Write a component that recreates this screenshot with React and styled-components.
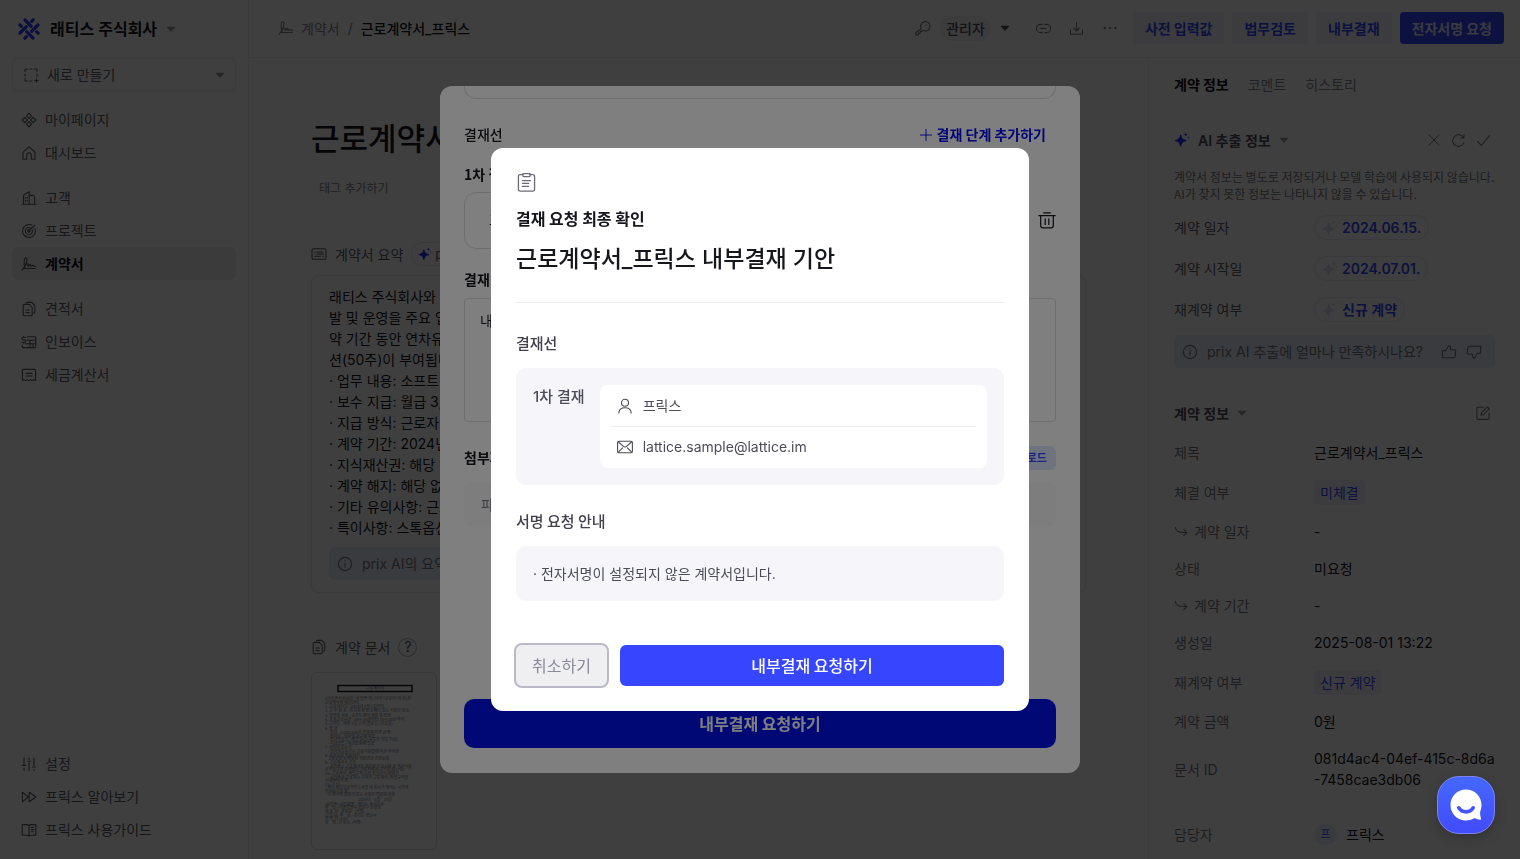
import React from 'react';
import styled, { createGlobalStyle, css } from 'styled-components';

const latin = "Inter, 'Noto Sans CJK KR', sans-serif";
const korean = "'Noto Sans CJK KR', Inter, sans-serif";

const GlobalStyle = createGlobalStyle`
  * {
    box-sizing: border-box;
  }

  body {
    margin: 0;
    background: #fff;
    color: #16161d;
    font-family: ${latin};
    font-size: 14px;
    line-height: 21px;
  }

  h1, h2, h3, p, ul, dl, dd {
    margin: 0;
    padding: 0;
    font-weight: 400;
  }

  button {
    padding: 0;
    border: none;
    background: none;
    color: inherit;
    font: inherit;
    cursor: pointer;
  }

  a {
    color: inherit;
    text-decoration: none;
  }

  svg {
    display: block;
    flex: none;
  }
`;

/* icons */

const Svg = styled.svg`
  width: ${(p) => p.$size || 16}px;
  height: ${(p) => p.$size || 16}px;
  fill: none;
  stroke: currentColor;
  stroke-width: 1.1;
  stroke-linecap: round;
  stroke-linejoin: round;
`;

const shapes = {
  newBox: (
    <>
      <path d="M2 4.5V2.8a.8.8 0 0 1 .8-.8h1.7M7 2h2M11.5 2h1.7a.8.8 0 0 1 .8.8v1.7M14 7v2M2 7v2M2 11.5v1.7a.8.8 0 0 0 .8.8h1.7M7 14h2" />
      <path d="M13.5 11.8v3.4M11.8 13.5h3.4" />
    </>
  ),
  diamonds: (
    <>
      <path d="M8 1.2 10.6 3.8 8 6.4 5.4 3.8zM8 9.6l2.6 2.6L8 14.8l-2.6-2.6zM3.8 5.4 6.4 8l-2.6 2.6L1.2 8zM12.2 5.4 14.8 8l-2.6 2.6L9.6 8z" />
    </>
  ),
  home: <path d="M2 7.2 8 1.8l6 5.4v7h-3.8V10a2.2 2.2 0 0 0-4.4 0v4.2H2z" />,
  building: (
    <>
      <path d="M1 14.2h14M2.6 14V5l5.6-3.4V14M8.2 5.4h4a1.4 1.4 0 0 1 1.4 1.4V14" />
      <path d="M4.6 7.4v.8M6.3 7.4v.8M4.6 10.4v.8M6.3 10.4v.8" />
    </>
  ),
  target: (
    <>
      <path d="M10.8 2.1a6.5 6.5 0 1 0 3.2 3.3" />
      <path d="M9.6 4.9A3.6 3.6 0 1 0 11.3 6.8" />
      <path d="M9.2 8a1.3 1.3 0 1 1-1.3-1.3M8 8l6-6" />
    </>
  ),
  sign: (
    <path d="M1 14.4C3.6 11 6 6.8 6 3.4 6 1 3.4 1.2 3.2 4.6c-.2 3 .2 6.200.8 7.600M3.400 11c1.400-2.400 2.800-3.400 3.400-3 .600.400-.200 2.400.600 2.400s1-2.400 1.800-2.200c.700.200 0 2.200.800 2.200s.900-1.200 1.600-1.100c.600.100.600 1.100 2.800 1.100M2.400 12.500h12" />
  ),
  docs: (
    <>
      <path d="M5.400 2.200A1.400 1.400 0 0 1 6.600 1.400h4.200l3 3v6.400a1.400 1.400 0 0 1-1.200 1.400" />
      <path d="M2.200 4.800a1.400 1.400 0 0 1 1.400-1.400h4.600l3 3v7a1.400 1.400 0 0 1-1.400 1.400H3.600a1.400 1.400 0 0 1-1.400-1.400zM5 9h3.200M5 11.600h3.200" />
    </>
  ),
  invoice: (
    <>
      <path d="M6 2.800h7.600a1.200 1.200 0 0 1 1.200 1.200v8.400a1.200 1.200 0 0 1-1.200 1.200H2.400a1.200 1.200 0 0 1-1.200-1.200v-1M6 6.200h8.800M4.400 9.800h10.400M9 6.200v7.200M12 9.800v3.600" />
      <path d="M4.400 3.200H2.200a1.200 1.200 0 0 0 0 2.500h1.200a1.300 1.300 0 0 1 0 2.600H1M2.800 2.400v.8M2.800 8.300v1" />
    </>
  ),
  taxBill: <path d="M2.400 2.400h11.200a1 1 0 0 1 1 1v10.200l-1.700-1-1.600 1-1.700-1-1.600 1-1.700-1-1.600 1-1.700-1-1.600 1V3.400a1 1 0 0 1 1-1zM5 6.400h6M5 9h6" />,
  sliders: <path d="M3 2v6M1.400 9.400h3.200M3 12v2.400M8 2v1.600M6.400 5.200h3.200M8 7v7.400M13 2v7.600M11.400 11h3.200M13 13.200v1.200" />,
  forward: <path d="M1.400 3.200 7.200 8l-5.800 4.800zM8.200 3.200 14.800 8l-6.600 4.800z" />,
  guide: <path d="M8 3.200v11M8 3.200C7.400 2.800 6.800 2.600 6 2.600H1.200v10.600H6c.8 0 1.400.3 2 1 .6-.7 1.200-1 2-1h4.800V2.600H10c-.8 0-1.400.2-2 .6M10.400 5.400h2M10.400 7.600h2M10.400 9.800h2" />,
  key: (
    <>
      <path d="M6.300 8.600A4.700 4.700 0 1 1 8 10.300l-1 1.100H5.300v1.700H3.500v1.500L.8 15v-2.200z" />
      <path d="M11.200 4.700h.1" />
    </>
  ),
  link: <path d="M6.600 3.600H4.800a4.400 4.400 0 0 0 0 8.800h1.800M9.400 3.600h1.800a4.400 4.400 0 0 1 0 8.800H9.400M5 8h6" />,
  download: <path d="M8 1.400v9M4.800 7.400 8 10.600l3.200-3.200M1.600 9.600v4.600h12.800V9.600" />,
  close: <path d="M2.400 2.200 13.600 13.800M13.600 2.200 2.400 13.800" />,
  refresh: <path d="M13.800 10.200A6.200 6.200 0 1 1 13.400 5M13.800 1.600v3.800h-3.800" />,
  check: <path d="M1.600 9 5.600 13.200 14.600 2.800" />,
  info: (
    <>
      <circle cx="8" cy="8" r="6.600" />
      <path d="M8 7.200v4M8 4.800v.1" />
    </>
  ),
  thumbUp: <path d="M4.600 6.800 7.600 1.800a1.700 1.700 0 0 1 1.800 1.700v2.300h3.900a1.400 1.400 0 0 1 1.400 1.600l-.7 5.200a1.400 1.400 0 0 1-1.400 1.200H1.400V6.800h3.200" />,
  thumbDown: <path d="M11.400 9.200 8.400 14.200a1.700 1.700 0 0 1-1.800-1.700v-2.300H2.700a1.400 1.400 0 0 1-1.400-1.600L2 3.400a1.400 1.400 0 0 1 1.400-1.200h11.200v7h-3.200" />,
  edit: <path d="M8.600 2.200H2.800a.9.900 0 0 0-.9.900v10.400c0 .5.400.9.900.9h10.400c.5 0 .9-.4.900-.9V8M6 10.200l.4-2.300 6-6 1.900 1.900-6 6z" />,
  summary: (
    <>
      <rect x="1" y="2.800" width="14" height="10.400" rx="1.400" />
      <path d="M3.800 6h.4M6 6h6.200M3.800 8h.4M6 8h6.200M3.800 10.200h5.600M11.600 10.200h.6" />
    </>
  ),
  sub: <path d="M1.400 3.600c.4 4.400 3.400 5.600 12 5.600M10.400 6l3.400 3.200-3.400 3.200" />,
  plus: <path d="M8 1.600v12.800M1.600 8h12.800" />,
  trash: <path d="M.8 4.200h14.400M5 1.600h6M2.400 4.200v9a1.800 1.800 0 0 0 1.800 1.800h7.600a1.800 1.800 0 0 0 1.800-1.800v-9M6.400 7v5M9.600 7v5" />,
  clipboard: (
    <>
      <path d="M5 1.400H2.600a1.400 1.400 0 0 0-1.400 1.400v11a1.400 1.400 0 0 0 1.400 1.400h10.800a1.400 1.400 0 0 0 1.400-1.400v-11a1.400 1.400 0 0 0-1.400-1.400H11" />
      <path d="M5 .6h6v1.500a1 1 0 0 1-1 1H6a1 1 0 0 1-1-1zM4.600 6.400h6.800M4.600 8.800h5.200M4.600 11.200h5.200" />
    </>
  ),
  person: (
    <>
      <circle cx="8" cy="4.800" r="3.500" />
      <path d="M1.800 15c.2-3.400 2.800-5.200 6.200-5.200s6 1.800 6.200 5.200" />
    </>
  ),
  mail: (
    <>
      <rect x=".6" y="2.200" width="14.800" height="11.600" rx="1.200" />
      <path d="M1.400 3l4.800 4.200a2.700 2.700 0 0 0 3.600 0L14.600 3M1.600 12.800l4-4M14.400 12.800l-4-4" />
    </>
  ),
};

const Icon = ({ name, size }) => (
  <Svg $size={size} viewBox="0 0 16 16" aria-hidden="true">
    {shapes[name]}
  </Svg>
);

const Filled = styled(Svg)`
  fill: currentColor;
  stroke: none;
  color: ${(p) => p.$color || 'inherit'};
`;

const Caret = ({ color = '#9c9ca6' }) => (
  <Filled $size={10} $color={color} viewBox="0 0 10 10" aria-hidden="true">
    <path d="M1.200 2.800h7.600a.4.400 0 0 1 .3.700L5.400 7.600a.5.500 0 0 1-.8 0L.9 3.500a.4.400 0 0 1 .3-.7z" />
  </Filled>
);

const Sparkle = ({ size = 16, color = '#1a2cff' }) => (
  <Filled $size={size} $color={color} viewBox="0 0 16 16" aria-hidden="true">
    <path d="M6.700 2.600c.4 0 .6.3.7.7.6 3 1.500 3.900 4.500 4.600.9.200.9 1.200 0 1.400-3 .7-3.900 1.600-4.500 4.600-.2.900-1.200.9-1.400 0-.6-3-1.500-3.900-4.500-4.600-.9-.2-.9-1.200 0-1.400 3-.7 3.900-1.600 4.500-4.600.1-.4.300-.7.700-.7z" />
    <path d="M11.800.6c.3 1.300.7 1.700 2 2-1.300.3-1.700.7-2 2-.3-1.300-.7-1.700-2-2 1.300-.3 1.700-.7 2-2zM14.500 4.500c.2.800.4 1 1.200 1.200-.8.200-1 .4-1.200 1.200-.2-.8-.4-1-1.200-1.200.8-.2 1-.4 1.200-1.200z" />
  </Filled>
);

const Logo = () => (
  <svg width="24" height="24" viewBox="0 0 24 24" aria-hidden="true">
    <g fill="none" stroke="#2a3cff" strokeWidth="3.200" strokeLinecap="round">
      {[0, 90, 180, 270].map((deg) => (
        <path key={deg} transform={`rotate(${deg} 12 12)`} d="M3 16 9.300 9.700M14.600 4.400 16.200 2.800" />
      ))}
    </g>
  </svg>
);

/* page shell */

const Page = styled.div`
  display: grid;
  grid-template-columns: 249px minmax(0, 1fr);
  height: 100vh;
  overflow: hidden;
`;

const Sidebar = styled.nav`
  display: flex;
  flex-direction: column;
  padding: 12px 12px 13px;
  border-right: 1px solid #ececf0;
`;

const Company = styled.button`
  display: flex;
  align-items: center;
  gap: 9px;
  height: 34px;
  padding: 0 5px;
  font-size: 16px;
  font-weight: 600;
`;

const NewButton = styled.button`
  display: flex;
  align-items: center;
  gap: 8px;
  height: 33px;
  margin: 12px 0;
  padding: 0 10px;
  border: 1px solid #e8e8ee;
  border-radius: 6px;
  box-shadow: 0 1px 3px rgba(0, 0, 0, 0.05);
  color: #5c5c68;

  span {
    flex: 1;
    text-align: left;
  }
`;

const NavGroup = styled.div`
  margin-bottom: 12px;

  &:last-child {
    margin: auto 0 0;
  }
`;

const NavLink = styled.a`
  display: flex;
  align-items: center;
  gap: 8px;
  height: 33px;
  padding: 0 9px;
  border-radius: 6px;
  color: #5c5c68;
  background: ${(p) => (p.$active ? '#ededf0' : 'transparent')};

  span {
    color: ${(p) => (p.$active ? '#0a0a14' : 'inherit')};
    font-weight: ${(p) => (p.$active ? 600 : 400)};
  }
`;

const Main = styled.div`
  display: flex;
  flex-direction: column;
  min-width: 0;
  min-height: 0;
`;

const TopBar = styled.header`
  display: flex;
  align-items: center;
  justify-content: space-between;
  flex: none;
  height: 58px;
  padding: 0 16px 1px 29px;
  border-bottom: 1px solid #ececf0;
`;

const Row = styled.div`
  display: flex;
  align-items: center;
  gap: ${(p) => p.$gap}px;
`;

const Crumb = styled.a`
  display: flex;
  align-items: center;
  gap: 7px;
  color: #85858f;
`;

const CrumbCurrent = styled.h2`
  font-size: 14px;
  font-weight: 500;
`;

const Tools = styled(Row)`
  margin-right: 7px;
  color: #777782;
`;

const RoleButton = styled.button`
  display: flex;
  align-items: center;
  gap: 9px;
  margin: 0 15px 0 -2px;
  color: #4c4c58;
  font-weight: 500;

  span {
    padding: 2px 6px;
    border-radius: 13px;
    background: #f2f2f4;
  }
`;

const Dots = styled.button`
  font-size: 16px;
`;

const BarButton = styled.button`
  height: 32px;
  padding: 0 12px;
  border-radius: 4px;
  font-family: ${korean};
  font-weight: 600;
  color: ${(p) => (p.$primary ? '#e4e4ff' : '#3646ff')};
  background: ${(p) => (p.$primary ? '#3646ff' : '#f0f3ff')};
`;

const Body = styled.div`
  display: grid;
  grid-template-columns: minmax(0, 1fr) 372px;
  flex: 1;
  min-height: 0;
`;

/* document column */

const Document = styled.main`
  padding: 55px 62px 0;
  overflow: hidden;
`;

const DocTitle = styled.h1`
  font-family: ${korean};
  font-size: 31px;
  font-weight: 500;
  line-height: 48px;
`;

const TagButton = styled.button`
  display: block;
  margin: 17px 0 0 8px;
  color: #85858f;
  font-size: 12px;
`;

const SectionHead = styled.div`
  display: flex;
  align-items: center;
  gap: 8px;
  height: 26px;
  margin-top: ${(p) => p.$top}px;
  color: #5c5c68;

  h3 {
    font-size: 14px;
  }
`;

const AiPill = styled.span`
  display: flex;
  align-items: center;
  gap: 3px;
  height: 24px;
  padding: 0 6px;
  border: 1px solid #e6e6ee;
  border-radius: 12px;
  font-size: 13px;
`;

const SummaryCard = styled.section`
  margin-top: 8px;
  padding: 10px 17px 12px;
  border: 1px solid #e8e8ec;
  border-radius: 8px;

  p {
    white-space: nowrap;
  }
`;

const InfoBanner = styled.div`
  display: flex;
  align-items: center;
  gap: 9px;
  height: 33px;
  margin-top: ${(p) => p.$top}px;
  padding: 0 13px 0 8px;
  border-radius: 6px;
  background: #e9edfa;
  color: #747480;
  white-space: nowrap;

  span {
    flex: 1;
  }
`;

const HelpButton = styled.button`
  width: 19px;
  height: 19px;
  border: 1px solid #b0b0b8;
  border-radius: 50%;
  color: #4c4c58;
  line-height: 16px;
`;

const Thumb = styled.button`
  display: block;
  width: 126px;
  height: 178px;
  margin-top: 12px;
  border: 1px solid #dcdce2;
  border-radius: 6px;
`;

const thumbLines = [
  [25, '(이하 주식회사라 "사업주"와 (이하 "근로자"라 함)은'],
  [29, '근로계약을 체결한다.'],
  [33, '1. 근로개시일 : 2024년 7월 1일부터'],
  [37, '2. 근 무 장 소 : 회사의 본점 소재지 또는 지정한 장소'],
  [42, '3. 업무의 내용 : 소프트웨어 개발 및 운영'],
  [46, '4. 소정근로시간 : 09시 00분부터 18시 00분까지'],
  [50, '5. 근무일 : 매주 5일 근무(월요일~금요일)'],
  [55, '6. 임 금'],
  [59, '   - 월급 : 3,000,000원 연봉에 따른 금액'],
  [63, '   - 상여금 : 회사의 내규에 따름'],
  [66, '   - 임금지급일 : 매월 25일(휴일은 전일 지급)'],
  [70, '   - 지급방법 : 예금통장에 입금'],
  [74, '7. 연차유급휴가'],
  [78, '   - 연차유급휴가는 근로기준법에 따라 부여함'],
  [82, '8. 사회보험 적용여부'],
  [85, '   고용보험 산재보험 국민연금 건강보험'],
  [89, '9. 근로계약서 교부'],
  [93, '   - 사업주는 근로계약을 체결함과 동시에 본 계약서를'],
  [96, '교부요구와 관계없이 근로자에게 교부함(제17조)'],
  [100, '10. 근로계약, 취업규칙 등의 성실한 이행의무'],
  [104, '   - 사업주와 근로자는 각자가 근로계약, 취업규칙을'],
  [107, '이행하여야 함.'],
  [111, '11. 기 타'],
  [114, '- 계약 체결일로부터 1개월 내 회사가 정하는 시기에'],
  [118, '부여하기로 함.'],
  [121, '- 이 계약에 정함이 없는 사항은 법령에 의함'],
  [126, '                                     2024년    6월    15일'],
  [131, '(사업주) 사업체명 : 래티스 주식회사'],
  [134, '주    소 : 서울특별시 강남구 선릉로'],
  [138, '대 표 자 : 강상원   (서명)'],
  [142, '(근로자) 주    소 : 경기도 성남시'],
  [145, '연 락 처 : 010'],
  [149, '성    명 : 프릭스  (서명)'],
];

const ThumbPage = styled.svg`
  fill: #6c6c76;
  stroke: none;
  font-family: ${korean};
  font-size: 4px;
  font-weight: 400;

  text {
    white-space: pre;
  }
`;

/* info panel */

const Panel = styled.aside`
  padding: 16px 25px 0;
  border-left: 1px solid #ececf0;
  overflow: hidden;
`;

const Tabs = styled.div`
  display: flex;
  gap: 19px;
  font-family: ${korean};
`;

const Tab = styled.button`
  color: ${(p) => (p.$active ? '#0a0a14' : '#85858f')};
  font-weight: ${(p) => (p.$active ? 600 : 400)};
`;

const PanelHead = styled.div`
  display: flex;
  align-items: center;
  gap: 8px;
  height: 26px;
  margin-top: ${(p) => p.$top}px;
  padding-right: 4px;
  color: #4c4c58;

  h3 {
    font-size: 14px;
    font-weight: 600;
  }

  button {
    color: #777782;
  }
`;

const Spacer = styled.span`
  flex: 1;
`;

const Note = styled.p`
  margin-top: 15px;
  color: #777782;
  font-family: ${korean};
  font-size: 12px;
  line-height: 17px;
  white-space: nowrap;
`;

const Fields = styled.dl`
  padding-top: ${(p) => p.$top}px;
`;

const Field = styled.div`
  display: grid;
  grid-template-columns: 140px minmax(0, 1fr);
  align-items: center;
  min-height: ${(p) => p.$height || 37}px;
  margin-top: ${(p) => p.$top || 0}px;

  dt {
    display: flex;
    align-items: center;
    gap: 5px;
    color: ${(p) => (p.$ai ? '#5c5c68' : '#777782')};
  }

  dd {
    display: flex;
    align-items: center;
    gap: 9px;
    white-space: pre-line;
  }
`;

const AiChip = styled.button`
  display: flex;
  align-items: center;
  gap: 4px;
  height: 25px;
  padding: 0 7px;
  border: 1px solid #e9e9f8;
  border-radius: 13px;
  color: #3646ff;
  font-weight: 600;
`;

const Chip = styled.span`
  padding: 2px 6px;
  border-radius: 4px;
  background: #f0f3ff;
  color: #3646ff;
`;

const Avatar = styled.span`
  display: grid;
  place-items: center;
  width: 23px;
  height: 21px;
  border-radius: 11px;
  background: #e9edff;
  color: #3646ff;
  font-size: 11px;
`;

/* modals */

const Overlay = styled.div`
  position: fixed;
  inset: 0;
  display: flex;
  align-items: center;
  justify-content: center;
  background: rgba(0, 0, 0, 0.5);
`;

const Sheet = styled.section`
  display: flex;
  flex-direction: column;
  width: 640px;
  max-width: 94vw;
  height: 80vh;
  padding: 0 24px 25px;
  border-radius: 12px;
  background: #fff;
  overflow: hidden;
`;

const box = css`
  border: 1px solid #dcdce2;
  border-radius: ${(p) => p.$radius || 12}px;
`;

const CutBox = styled.div`
  ${box}
  flex: none;
  height: 13px;
  border-top: none;
  border-radius: 0 0 12px 12px;
`;

const SheetHead = styled.div`
  display: flex;
  align-items: center;
  justify-content: space-between;
  height: 24px;
  margin-top: ${(p) => p.$top}px;
  font-family: ${korean};
  font-weight: ${(p) => (p.$strong ? 600 : 500)};
`;

const AddStep = styled.button`
  display: flex;
  align-items: center;
  gap: 4px;
  margin-right: 10px;
  color: #0008f0;
  font-weight: 600;
`;

const Approver = styled.div`
  display: flex;
  align-items: center;
  justify-content: space-between;
  margin-top: 5px;
`;

const ApproverBox = styled.div`
  ${box}
  width: 556px;
  height: 57px;
  padding: 16px 24px;
`;

const Memo = styled.textarea`
  ${box}
  flex: none;
  height: 124px;
  margin-top: 6px;
  padding: 11px 15px;
  color: #16161d;
  background: none;
  font: inherit;
  resize: none;
`;

const UploadButton = styled.button`
  height: 24px;
  padding: 0 9px;
  border-radius: 6px;
  background: #dfe6ff;
  color: #3646ff;
  font-size: 11px;
`;

const FileBox = styled.div`
  flex: none;
  height: 43px;
  margin-top: 13px;
  padding: 11px 17px;
  border-radius: 6px;
  background: #fafafa;
  color: #777782;
`;

const SheetSubmit = styled.button`
  flex: none;
  height: 49px;
  margin-top: auto;
  border-radius: 10px;
  background: #0010ec;
  color: #fff;
  font-family: ${korean};
  font-size: 16px;
  font-weight: 600;
`;

const Dialog = styled.section`
  width: 538px;
  max-width: 92vw;
  padding: 25px;
  border-radius: 12px;
  background: #fff;
  color: #4c4c58;
`;

const DialogIcon = styled.div`
  height: 20px;
  padding: 0 1px;
  color: #6c6c78;
`;

const DialogLabel = styled.h2`
  margin-top: 13px;
  color: #16161d;
  font-family: ${korean};
  font-size: 16px;
  font-weight: 600;
  line-height: 24px;
`;

const DialogTitle = styled.h1`
  margin-top: 13px;
  padding-bottom: 27px;
  border-bottom: 1px solid #ececf4;
  color: #16161d;
  font-size: 23px;
  font-weight: 500;
  line-height: 32px;
`;

const DialogSection = styled.h3`
  margin: ${(p) => p.$top}px 0 14px;
  color: #42424e;
  font-family: ${korean};
  font-size: 15px;
  font-weight: 500;
  line-height: 22px;
`;

const GrayBox = styled.div`
  display: flex;
  gap: 15px;
  padding: 17px;
  border-radius: 10px;
  background: #f5f5fa;
`;

const StepName = styled.span`
  font-size: 15px;
  font-weight: 500;
  line-height: 24px;
`;

const StepCard = styled.ul`
  flex: 1;
  padding: 0 11px;
  border-radius: 8px;
  background: #fff;
  list-style: none;
`;

const StepLine = styled.li`
  display: flex;
  align-items: center;
  gap: 10px;
  height: 41px;
  padding: 0 6px;

  & + & {
    height: 42px;
    padding-bottom: 2px;
    border-top: 1px solid #ececf4;
  }
`;

const Actions = styled.div`
  display: flex;
  gap: 13px;
  margin-top: 44px;
`;

const ActionButton = styled.button`
  height: 41px;
  border-radius: 6px;
  font-family: ${korean};
  font-size: 16px;
`;

const CancelButton = styled(ActionButton)`
  padding: 0 16px;
  background: #efeff2;
  color: #8a8a98;
  outline: 2px solid #b9b9c8;
`;

const SubmitButton = styled(ActionButton)`
  flex: 1;
  background: #3646ff;
  color: #fff;
  font-weight: 500;
`;

const ChatButton = styled.button`
  position: fixed;
  right: 25px;
  bottom: 25px;
  display: grid;
  place-items: center;
  width: 58px;
  height: 58px;
  border: 1px solid #7d83f5;
  border-radius: 22px;
  background: linear-gradient(#4468ff, #424bfa);
  box-shadow: 0 4px 12px rgba(0, 0, 0, 0.2);
`;

const navGroups = [
  [
    ['diamonds', '마이페이지'],
    ['home', '대시보드'],
  ],
  [
    ['building', '고객'],
    ['target', '프로젝트'],
    ['sign', '계약서', true],
  ],
  [
    ['docs', '견적서'],
    ['invoice', '인보이스'],
    ['taxBill', '세금계산서'],
  ],
  [
    ['sliders', '설정'],
    ['forward', '프릭스 알아보기'],
    ['guide', '프릭스 사용가이드'],
  ],
];

const summary = [
  '래티스 주식회사와 프릭스 간의 근로계약으로, 소프트웨어 개',
  '발 및 운영을 주요 업무로 하며',
  '약 기간 동안 연차유급휴가와 스톡옵',
  '션(50주)이 부여됩니다.',
  '· 업무 내용: 소프트웨어 개발 및 운영',
  '· 보수 지급: 월급 3,000,000원',
  '· 지급 방식: 근로자 명의 계좌로 입금',
  '· 계약 기간: 2024년 7월 1일부터',
  '· 지식재산권: 해당 없음',
  '· 계약 해지: 해당 없음',
  '· 기타 유의사항: 근로기준법에 따름',
  '· 특이사항: 스톡옵션 50주 부여',
];

const aiFields = [
  ['계약 일자', '2024.06.15.'],
  ['계약 시작일', '2024.07.01.'],
  ['재계약 여부', '신규 계약'],
];

const fields = [
  { label: '제목', value: '근로계약서_프릭스' },
  { label: '체결 여부', value: '미체결', chip: true },
  { label: '계약 일자', value: '-', sub: true },
  { label: '상태', value: '미요청' },
  { label: '계약 기간', value: '-', sub: true },
  { label: '생성일', value: '2025-08-01 13:22' },
  { label: '재계약 여부', value: '신규 계약', chip: true },
  { label: '계약 금액', value: '0원' },
  { label: '문서 ID', value: '081d4ac4-04ef-415c-8d6a\n-7458cae3db06', height: 58 },
];

const SidebarNav = () => (
  <Sidebar>
    <Company type="button">
      <Logo />
      래티스 주식회사
      <Caret />
    </Company>
    <NewButton type="button">
      <Icon name="newBox" />
      <span>새로 만들기</span>
      <Caret />
    </NewButton>
    {navGroups.map((group) => (
      <NavGroup key={group[0][1]}>
        {group.map(([icon, label, active]) => (
          <NavLink href="#" key={label} $active={active}>
            <Icon name={icon} />
            <span>{label}</span>
          </NavLink>
        ))}
      </NavGroup>
    ))}
  </Sidebar>
);

const Header = () => (
  <TopBar>
    <Row $gap={8}>
      <Crumb href="#">
        <Icon name="sign" />
        계약서
      </Crumb>
      <Crumb as="span">/</Crumb>
      <CrumbCurrent>근로계약서_프릭스</CrumbCurrent>
    </Row>
    <Row $gap={8}>
      <Tools $gap={11}>
        <Icon name="key" />
        <RoleButton type="button">
          <span>관리자</span>
          <Caret color="#4c4c58" />
        </RoleButton>
        <Row $gap={18}>
          <button type="button" aria-label="링크 복사">
            <Icon name="link" size={15} />
          </button>
          <button type="button" aria-label="다운로드">
            <Icon name="download" size={15} />
          </button>
          <Dots type="button" aria-label="더보기">
            ⋯
          </Dots>
        </Row>
      </Tools>
      <BarButton type="button">사전 입력값</BarButton>
      <BarButton type="button">법무검토</BarButton>
      <BarButton type="button">내부결재</BarButton>
      <BarButton type="button" $primary>
        전자서명 요청
      </BarButton>
    </Row>
  </TopBar>
);

const DocumentColumn = () => (
  <Document>
    <DocTitle>근로계약서_프릭스</DocTitle>
    <TagButton type="button">태그 추가하기</TagButton>
    <SectionHead $top={42}>
      <Icon name="summary" />
      <h3>계약서 요약</h3>
      <AiPill>
        <Sparkle size={14} />
        prix AI
      </AiPill>
    </SectionHead>
    <SummaryCard>
      {summary.map((line) => (
        <p key={line}>{line}</p>
      ))}
      <InfoBanner $top={9}>
        <Icon name="info" />
        <span>prix AI의 요약에 얼마나 만족하시나요?</span>
        <Icon name="thumbUp" />
        <Icon name="thumbDown" />
      </InfoBanner>
    </SummaryCard>
    <SectionHead $top={41}>
      <Icon name="docs" />
      <h3>계약 문서</h3>
      <HelpButton type="button">?</HelpButton>
    </SectionHead>
    <Thumb type="button" aria-label="계약 문서 열기">
      <ThumbPage width="124" height="176" viewBox="0 0 124 176">
        <rect x="26" y="12.500" width="74" height="6" fill="none" stroke="#101018" strokeWidth="1.400" />
        <text x="63" y="17" textAnchor="middle">
          근로계약서
        </text>
        {thumbLines.map(([y, line]) => (
          <text key={y} x="13" y={y + 2}>
            {line}
          </text>
        ))}
      </ThumbPage>
    </Thumb>
  </Document>
);

const InfoPanel = () => (
  <Panel>
    <Tabs>
      <Tab type="button" $active>
        계약 정보
      </Tab>
      <Tab type="button">코멘트</Tab>
      <Tab type="button">히스토리</Tab>
    </Tabs>
    <PanelHead $top={32}>
      <Sparkle />
      <h3>AI 추출 정보</h3>
      <Caret />
      <Spacer />
      <Row $gap={10}>
        <button type="button" aria-label="취소">
          <Icon name="close" size={14} />
        </button>
        <button type="button" aria-label="다시 추출">
          <Icon name="refresh" size={15} />
        </button>
        <button type="button" aria-label="적용">
          <Icon name="check" size={15} />
        </button>
      </Row>
    </PanelHead>
    <Note>
      계약서 정보는 별도로 저장되거나 모델 학습에 사용되지 않습니다.
      <br />
      AI가 찾지 못한 정보는 나타나지 않을 수 있습니다.
    </Note>
    <Fields $top={5}>
      {aiFields.map(([label, value]) => (
        <Field key={label} $height={41} $ai>
          <dt>{label}</dt>
          <dd>
            <AiChip type="button">
              <Sparkle color="#d4dafa" />
              {value}
            </AiChip>
          </dd>
        </Field>
      ))}
    </Fields>
    <InfoBanner $top={5}>
      <Icon name="info" />
      <span>prix AI 추출에 얼마나 만족하시나요?</span>
      <Icon name="thumbUp" />
      <Icon name="thumbDown" />
    </InfoBanner>
    <PanelHead $top={32}>
      <h3>계약 정보</h3>
      <Caret />
      <Spacer />
      <button type="button" aria-label="수정">
        <Icon name="edit" />
      </button>
    </PanelHead>
    <Fields $top={8}>
      {fields.map((f) => (
        <Field key={f.label + f.value} $height={f.chip ? 42 : f.height}>
          <dt>
            {f.sub && <Icon name="sub" size={15} />}
            {f.label}
          </dt>
          <dd>{f.chip ? <Chip>{f.value}</Chip> : f.value}</dd>
        </Field>
      ))}
      <Field $top={15} $height={42}>
        <dt>담당자</dt>
        <dd>
          <Avatar>프</Avatar>
          프릭스
        </dd>
      </Field>
    </Fields>
  </Panel>
);

const RequestSheet = () => (
  <Overlay>
    <Sheet>
      <CutBox />
      <SheetHead $top={24}>
        결재선
        <AddStep type="button">
          <Icon name="plus" size={14} />
          결재 단계 추가하기
        </AddStep>
      </SheetHead>
      <SheetHead $top={16} $strong>
        1차 결재
      </SheetHead>
      <Approver>
        <ApproverBox>프릭스</ApproverBox>
        <button type="button" aria-label="결재 단계 삭제">
          <Icon name="trash" size={18} />
        </button>
      </Approver>
      <SheetHead as="label" htmlFor="memo" $top={19} $strong>
        결재 내용
      </SheetHead>
      <Memo id="memo" $radius={4} defaultValue="내부결재 요청드립니다." />
      <SheetHead $top={24} $strong>
        첨부파일
        <UploadButton type="button">업로드</UploadButton>
      </SheetHead>
      <FileBox>파일을 첨부해 주세요.</FileBox>
      <SheetSubmit type="button">내부결재 요청하기</SheetSubmit>
    </Sheet>
  </Overlay>
);

const ConfirmDialog = () => (
  <Overlay>
    <Dialog role="dialog" aria-modal="true" aria-labelledby="confirm-title">
      <DialogIcon>
        <Icon name="clipboard" size={19} />
      </DialogIcon>
      <DialogLabel>결재 요청 최종 확인</DialogLabel>
      <DialogTitle id="confirm-title">근로계약서_프릭스 내부결재 기안</DialogTitle>
      <DialogSection $top={29}>결재선</DialogSection>
      <GrayBox>
        <StepName>1차 결재</StepName>
        <StepCard>
          <StepLine>
            <Icon name="person" />
            프릭스
          </StepLine>
          <StepLine>
            <Icon name="mail" />
            lattice.sample@lattice.im
          </StepLine>
        </StepCard>
      </GrayBox>
      <DialogSection $top={25}>서명 요청 안내</DialogSection>
      <GrayBox>· 전자서명이 설정되지 않은 계약서입니다.</GrayBox>
      <Actions>
        <CancelButton type="button">취소하기</CancelButton>
        <SubmitButton type="button">내부결재 요청하기</SubmitButton>
      </Actions>
    </Dialog>
  </Overlay>
);

const App = () => (
  <>
    <GlobalStyle />
    <Page>
      <SidebarNav />
      <Main>
        <Header />
        <Body>
          <DocumentColumn />
          <InfoPanel />
        </Body>
      </Main>
    </Page>
    <RequestSheet />
    <ConfirmDialog />
    <ChatButton type="button" aria-label="채팅 상담">
      <svg width="34" height="34" viewBox="0 0 34 34">
        <path
          d="M17 1.500C8.300 1.500 1.500 8.300 1.500 17S8.300 32.500 17 32.500c3.300 0 6.300-.9 8.800-2.500 1.600 1.100 3.500 1.700 5.600 1.700.5 0 .8-.4.700-.9-.7-2.300-1.200-4.700-.9-7.200.8-2 1.300-4.300 1.300-6.600C32.500 8.300 25.700 1.500 17 1.500z"
          fill="#fff"
        />
        <path d="M9.800 19.800c3.400 5.400 11 5.400 14.400 0" fill="none" stroke="#4355fb" strokeWidth="3.600" strokeLinecap="round" />
      </svg>
    </ChatButton>
  </>
);

export default App;
